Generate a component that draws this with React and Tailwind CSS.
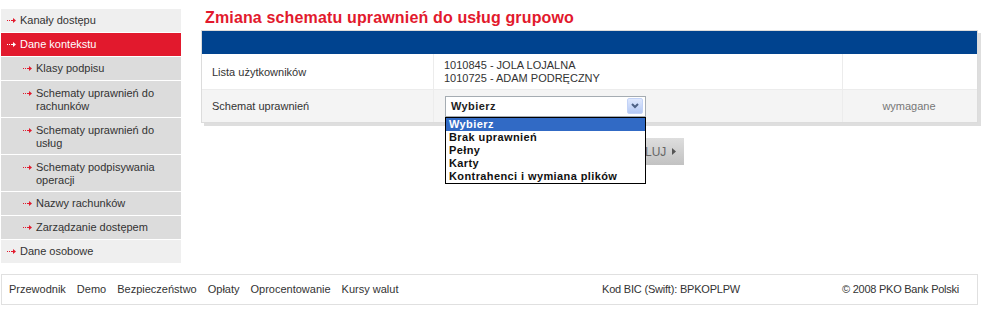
import React from 'react';

const font = { fontFamily: '"Liberation Sans", Arial, sans-serif' };

function Arrow({ white }) {
  const c = white ? '#ffffff' : '#e2192d';
  return (
    <svg width="9" height="5" viewBox="0 0 9 5" className="shrink-0">
      <rect x="0" y="2" width="1" height="1" fill={c} />
      <rect x="2" y="2" width="1" height="1" fill={c} />
      <rect x="4" y="2" width="3" height="1" fill={c} />
      <polygon points="6,0 9,2.5 6,5" fill={c} />
    </svg>
  );
}

const menu = [
  { label: 'Kanały dostępu', level: 0 },
  { label: 'Dane kontekstu', level: 0, active: true },
  { label: 'Klasy podpisu', level: 1 },
  { label: ['Schematy uprawnień do', 'rachunków'], level: 1 },
  { label: ['Schematy uprawnień do', 'usług'], level: 1 },
  { label: ['Schematy podpisywania', 'operacji'], level: 1 },
  { label: 'Nazwy rachunków', level: 1 },
  { label: 'Zarządzanie dostępem', level: 1 },
  { label: 'Dane osobowe', level: 0 },
];

function Sidebar() {
  return (
    <div className="w-[180px] ml-[1px] mt-[9px] flex flex-col">
      {menu.map((m, i) => {
        const multi = Array.isArray(m.label);
        const bg = m.active ? 'bg-[#e2192d] text-white' : m.level === 1 ? 'bg-[#dcdcdc] text-[#333]' : 'bg-[#efefef] text-[#333]';
        return (
          <div key={i} className={`${bg} border-b border-white flex ${multi ? 'h-[37px] items-start pt-[6px]' : 'h-[24px] items-center'} ${m.level === 1 ? 'pl-[22px]' : 'pl-[6px]'}`}>
            <div className={`flex items-center ${multi ? 'h-[13px]' : ''}`}>
              <Arrow white={m.active} />
            </div>
            <div className="ml-[4px] text-[11px] leading-[13px]">
              {multi ? (<>{m.label[0]}<br />{m.label[1]}</>) : m.label}
            </div>
          </div>
        );
      })}
    </div>
  );
}

function SelectBox() {
  const opts = ['Wybierz', 'Brak uprawnień', 'Pełny', 'Karty', 'Kontrahenci i wymiana plików'];
  return (
    <div className="relative w-[201px] h-[21px]">
      <div className="h-full border border-[#a5acb2] bg-white flex items-center justify-between pl-[5px] pr-[2px]">
        <span className="text-[11px] font-bold tracking-[0.4px] text-[#222]">Wybierz</span>
        <div className="w-[16px] h-[16px] rounded-[2px] bg-gradient-to-b from-[#dfe8fd] to-[#b4c9f5] border border-[#c3d3f7] flex items-center justify-center">
          <svg width="8" height="6" viewBox="0 0 8 6">
            <path d="M1 1 L4 4 L7 1" stroke="#4d6185" strokeWidth="2" fill="none" />
          </svg>
        </div>
      </div>
      <div className="absolute left-0 top-[21px] w-[201px] border border-black bg-white z-10">
        {opts.map((o, i) => (
          <div key={i} className={`h-[13px] leading-[13px] px-[3px] text-[11px] font-bold tracking-[0.4px] ${i === 0 ? 'bg-[#316ac5] text-white' : 'text-[#111]'}`}>{o}</div>
        ))}
      </div>
    </div>
  );
}

function Main() {
  return (
    <div className="ml-[20px] w-[777px]">
      <h1 className="pt-[8px] h-[30px] pl-[4px] text-[16px] leading-[20px] font-bold tracking-[0.15px] text-[#e2192d]">Zmiana schematu uprawnień do usług grupowo</h1>
      <div className="border border-[#dcdcdc] shadow-[3px_3px_0_#dedede] bg-white">
        <div className="h-[23px] bg-[#00438f]" />
        <div className="grid grid-cols-[232px_409px_1fr] h-[36px] border-b border-[#ececec] text-[11px] text-[#333]">
          <div className="flex items-center pt-[2px] pl-[10px] border-r border-[#ececec]">Lista użytkowników</div>
          <div className="flex items-center pl-[10px] border-r border-[#ececec] leading-[13px]">
            <div>1010845 - JOLA LOJALNA<br />1010725 - ADAM PODRĘCZNY</div>
          </div>
          <div />
        </div>
        <div className="grid grid-cols-[232px_409px_1fr] h-[32px] bg-[#f4f4f4] text-[11px] text-[#333]">
          <div className="flex items-center pl-[10px] border-r border-[#ececec]">Schemat uprawnień</div>
          <div className="flex items-center pl-[11px] border-r border-[#ececec]">
            <SelectBox />
          </div>
          <div className="flex items-center justify-center text-[#777] pr-[2px]">wymagane</div>
        </div>
      </div>
      <div className="mt-[15px] ml-[411px] w-[72px] h-[27px] bg-gradient-to-b from-[#dedede] to-[#c2c2c2] flex items-center justify-center gap-[6px] text-[12px] text-[#666]">
        <span>ANULUJ</span>
        <svg width="4" height="7" viewBox="0 0 4 7"><polygon points="0,0 4,3.5 0,7" fill="#555" /></svg>
      </div>
    </div>
  );
}

function Footer() {
  const links = ['Przewodnik', 'Demo', 'Bezpieczeństwo', 'Opłaty', 'Oprocentowanie', 'Kursy walut'];
  return (
    <div className="ml-[1px] mt-[10px] w-[977px] h-[31px] border border-[#e0e0e0] flex items-center text-[11px] text-[#333]">
      <div className="flex-1 flex gap-[11px] pl-[7px]">
        {links.map(l => <span key={l}>{l}</span>)}
      </div>
      <span className="mr-[102px] tracking-[-0.2px]">Kod BIC (Swift): BPKOPLPW</span>
      <span className="pr-[18px] tracking-[-0.25px]">© 2008 PKO Bank Polski</span>
    </div>
  );
}

export default function App() {
  return (
    <div className="w-[988px] h-[314px] bg-white" style={font}>
      <div className="flex">
        <Sidebar />
        <Main />
      </div>
      <Footer />
    </div>
  );
}
